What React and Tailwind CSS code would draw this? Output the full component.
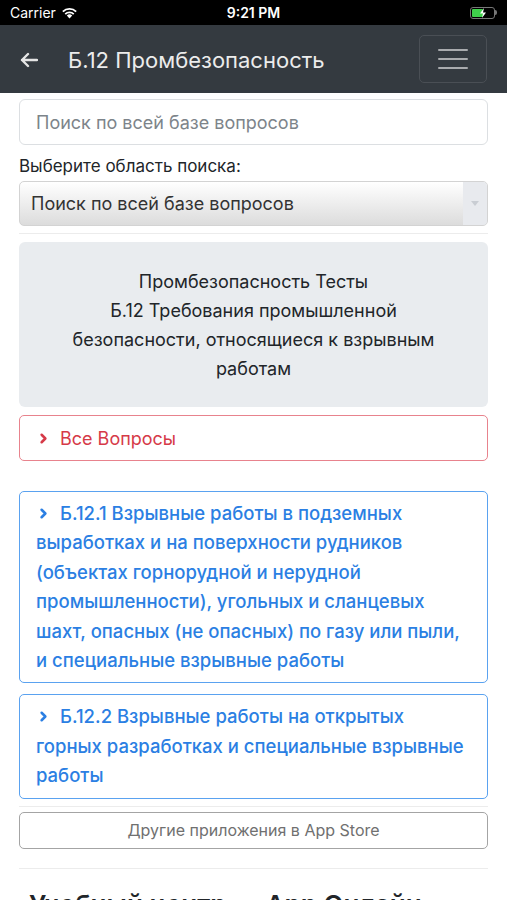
import { ChevronRight } from 'lucide-react';

function StatusBar() {
    return (
        <div className="h-[25px] bg-black text-white flex items-center px-[10px] relative text-[14px]">
            <div className="flex items-center gap-[5px]">
                <span>Carrier</span>
                <svg width="17" height="12" viewBox="0 0 17 12">
                    <path d="M8.5 11.5 L5.8 8.6 A4 4 0 0 1 11.2 8.6 Z" fill="white" />
                    <path d="M3.6 6.4 A7 7 0 0 1 13.4 6.4 L12.1 7.7 A5.2 5.2 0 0 0 4.9 7.7 Z" fill="white" />
                    <path d="M1.2 4 A10.4 10.4 0 0 1 15.8 4 L14.5 5.3 A8.6 8.6 0 0 0 2.5 5.3 Z" fill="white" />
                </svg>
            </div>
            <div className="absolute left-0 right-0 text-center font-semibold pointer-events-none">9:21 PM</div>
            <div className="ml-auto flex items-center">
                <div className="relative w-[25px] h-[12px] rounded-[3px] border border-[#777] p-[1px] flex">
                    <div className="w-[11px] h-full bg-[#3fd14b] rounded-[1px]"></div>
                    <svg width="8" height="10" viewBox="0 0 8 10" className="absolute left-[8px] top-0">
                        <path d="M5 0 L1 5.5 H4 L3 10 L7 4.5 H4 Z" fill="white" />
                    </svg>
                </div>
                <div className="w-[2px] h-[5px] bg-[#777] rounded-r-sm"></div>
            </div>
        </div>
    );
}

function Navbar() {
    return (
        <div className="h-[68px] bg-[#343a40] flex items-center pl-[20px] pr-[20px]">
            <svg width="18" height="16" viewBox="0 0 18 16" className="mr-[30px] mt-[2px]">
                <path d="M17 8 H2 M8 2 L2 8 L8 14" stroke="#e5e5e5" strokeWidth="2.4" fill="none" strokeLinecap="round" strokeLinejoin="round" />
            </svg>
            <p className="text-[22px] text-[#ececec] mt-[3px]">Б.12 Промбезопасность</p>
            <div className="ml-auto w-[68px] h-[48px] border border-[#4a4f55] rounded-[5px] flex flex-col items-center justify-center gap-[7px]">
                <div className="w-[30px] h-[2px] bg-[#a9abae] rounded"></div>
                <div className="w-[30px] h-[2px] bg-[#a9abae] rounded"></div>
                <div className="w-[30px] h-[2px] bg-[#a9abae] rounded"></div>
            </div>
        </div>
    );
}

export default function App() {
    return (
        <div className="w-[507px] h-[900px] overflow-hidden bg-white" style={{ fontFamily: 'Inter, "Noto Sans", sans-serif' }}>
            <StatusBar />
            <Navbar />
            <div className="px-[19px] pt-[6px]">
                <div className="h-[46px] border border-[#dcdfe2] rounded-[6px] flex items-center px-[16px] text-[18px] text-[#7d848a]">
                    Поиск по всей базе вопросов
                </div>
                <p className="mt-[8px] text-[17px] text-[#212529] leading-[26px]">Выберите область поиска:</p>
                <div className="mt-[2px] h-[45px] border border-[#d3d3d3] rounded-[5px] flex items-center bg-gradient-to-b from-white to-[#dcdcdc] overflow-hidden">
                    <span className="pl-[11px] text-[18px] text-[#333]">Поиск по всей базе вопросов</span>
                    <div className="ml-auto w-[24px] h-full bg-[#e8eaee] flex items-center justify-center">
                        <svg width="8" height="6" viewBox="0 0 8 6"><path d="M0 0 H8 L4 5 Z" fill="#c9cdd3" /></svg>
                    </div>
                </div>
                <div className="mt-[7px] border-t border-[#ececec]"></div>
                <div className="mt-[8px] h-[165px] bg-[#e9ecef] rounded-[6px] flex items-center justify-center text-center text-[18px] leading-[29px] text-[#212529]">
                    <p>Промбезопасность Тесты<br />Б.12 Требования промышленной<br />безопасности, относящиеся к взрывным<br />работам</p>
                </div>
                <div className="mt-[8px] h-[46px] border-[1.5px] border-[#e8838d] rounded-[5px] flex items-center pl-[16px] text-[18px] text-[#d63a48]">
                    <ChevronRight size={15} strokeWidth={4} className="mr-[9px]" />
                    Все Вопросы
                </div>
                <div className="mt-[30px] border-[1.5px] border-[#5aa2f0] rounded-[5px] pl-[16px] pr-[10px] py-[7px] text-[18.5px] leading-[29.4px] text-[#2b7fe3] font-medium">
                    <ChevronRight size={15} strokeWidth={4} className="inline mr-[9px] -mt-[3px]" />
                    Б.12.1 Взрывные работы в подземных<br />выработках и на поверхности рудников<br />(объектах горнорудной и нерудной<br />промышленности), угольных и сланцевых<br />шахт, опасных (не опасных) по газу или пыли,<br />и специальные взрывные работы
                </div>
                <div className="mt-[11px] border-[1.5px] border-[#5aa2f0] rounded-[5px] pl-[16px] pr-[10px] py-[7px] text-[18.5px] leading-[29.4px] text-[#2b7fe3] font-medium">
                    <ChevronRight size={15} strokeWidth={4} className="inline mr-[9px] -mt-[3px]" />
                    Б.12.2 Взрывные работы на открытых<br />горных разработках и специальные взрывные<br />работы
                </div>
                <div className="mt-[7px] border-t border-[#ececec]"></div>
                <div className="mt-[5px] h-[37px] border-[1.5px] border-[#a4a4a4] rounded-[5px] flex items-center justify-center text-[16px] text-[#707070]">
                    Другие приложения в App Store
                </div>
                <div className="mt-[19px] border-t border-[#ececec]"></div>
                <p className="mt-[20px] pl-[10px] text-[26px] font-semibold text-[#212529] leading-[32px]">Учебный центр — App Онлайн</p>
            </div>
        </div>
    );
}
